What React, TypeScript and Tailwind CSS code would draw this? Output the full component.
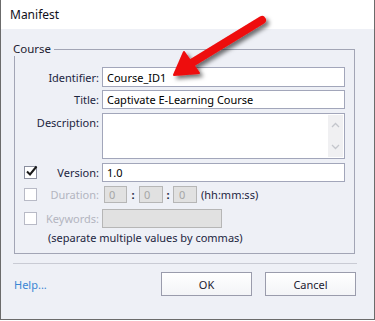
import React from "react";

const font = { fontFamily: '"Noto Sans", "Open Sans", sans-serif' };

function Check({ checked, disabled }: { checked?: boolean; disabled?: boolean }) {
  return (
    <div
      className={`relative w-[13px] h-[13px] border bg-white ${
        disabled ? "border-[#b8bac6]" : "border-[#8a8e9e]"
      }`}
    >
      {checked && (
        <svg className="absolute left-[0px] top-[-2px]" width="13" height="13" viewBox="0 0 13 13">
          <path d="M2 6.5 L5 9.5 L11.5 1.5" fill="none" stroke="#1a1a1a" strokeWidth="2" />
        </svg>
      )}
    </div>
  );
}

function Arrow() {
  return (
    <svg className="absolute left-0 top-0 pointer-events-none" width="375" height="321" viewBox="0 0 375 321">
      <defs>
        <filter id="sh" x="-20%" y="-20%" width="140%" height="140%">
          <feDropShadow dx="3" dy="3" stdDeviation="2.2" floodColor="#000" floodOpacity="0.55" />
        </filter>
      </defs>
      <g filter="url(#sh)">
        <line x1="262" y1="20" x2="190" y2="64" stroke="#ee0a0a" strokeWidth="8" strokeLinecap="round" />
        <polygon points="174,75 184,52 199,73" fill="#ee0a0a" stroke="#ee0a0a" strokeWidth="2" strokeLinejoin="round" />
      </g>
    </svg>
  );
}

export default function App() {
  return (
    <div className="relative w-[375px] h-[321px] bg-white text-[11px] leading-[15px]" style={font}>
      <div className="w-[375px] h-[320px] border-l border-r border-b border-[#6b6b6b] flex flex-col bg-[#eef0f6]">
        {/* title bar */}
        <div className="h-[29px] bg-white flex items-center pl-[9px] text-[#10101a] text-[12px]">Manifest</div>

        {/* body */}
        <div className="flex flex-col pl-[13px] pr-[18px] pt-[20px]">
          {/* group box */}
          <div className="relative border border-[#a2a5b5] w-[341px] h-[205px] pt-[17px] pr-[9px] flex flex-col">
            <span className="absolute left-[-2px] top-[-9px] bg-[#eef0f6] pr-[3px] text-[11.5px] text-[#1c2030]">Course</span>

            {/* Identifier */}
            <div className="flex items-center h-[20px]">
              <div className="w-[87px] pr-[3px] text-right text-[#1c2541]">Identifier:</div>
              <div className="flex-1 h-[20px] border border-[#a2a6ba] bg-white flex items-center pl-[4px] text-black">Course_ID1</div>
            </div>

            {/* Title */}
            <div className="flex items-center h-[19px] mt-[3px]">
              <div className="w-[87px] pr-[3px] text-right text-[#1c2541]">Title:</div>
              <div className="flex-1 h-[19px] border border-[#a2a6ba] bg-white flex items-center pl-[4px] text-black">
                Captivate E-Learning Course
              </div>
            </div>

            {/* Description */}
            <div className="flex items-start h-[46px] mt-[4px]">
              <div className="w-[87px] pr-[3px] text-right text-[#1c2541] pt-[2px]">Description:</div>
              <div className="flex-1 h-[46px] border border-[#a2a6ba] bg-white flex justify-end p-[1px]">
                <div className="w-[15px] bg-[#f0f0f2] flex flex-col items-center justify-between py-[7px]">
                  <svg width="9" height="6" viewBox="0 0 9 6">
                    <path d="M1 5 L4.5 1.5 L8 5" fill="none" stroke="#c4c6cc" strokeWidth="1.3" />
                  </svg>
                  <svg width="9" height="6" viewBox="0 0 9 6">
                    <path d="M1 1 L4.5 4.5 L8 1" fill="none" stroke="#c4c6cc" strokeWidth="1.3" />
                  </svg>
                </div>
              </div>
            </div>

            {/* Version */}
            <div className="flex items-center h-[19px] mt-[4px]">
              <div className="w-[87px] pr-[3px] flex items-center">
                <div className="ml-[9px]">
                  <Check checked />
                </div>
                <div className="flex-1 text-right text-[#1c2541]">Version:</div>
              </div>
              <div className="flex-1 h-[19px] border border-[#a2a6ba] bg-white flex items-center pl-[4px] text-black">1.0</div>
            </div>

            {/* Duration */}
            <div className="flex items-center h-[17px] mt-[4px]">
              <div className="w-[87px] pr-[3px] flex items-center">
                <div className="ml-[9px]">
                  <Check disabled />
                </div>
                <div className="flex-1 text-right text-[#b3b5c0]">Duration:</div>
              </div>
              <div className="flex items-center ml-[2px]">
                <div className="w-[23px] h-[17px] border border-[#b6b6b6] bg-[#e1e1e1] text-[#a6a6a6] pl-[4px] flex items-center">0</div>
                <span className="w-[12px] text-center font-bold text-[#1c2541]">:</span>
                <div className="w-[24px] h-[17px] border border-[#b6b6b6] bg-[#e1e1e1] text-[#a6a6a6] pl-[4px] flex items-center">0</div>
                <span className="w-[10px] text-center font-bold text-[#1c2541]">:</span>
                <div className="w-[24px] h-[17px] border border-[#b6b6b6] bg-[#e1e1e1] text-[#a6a6a6] pl-[5px] flex items-center">0</div>
                <span className="ml-[4px] text-[#1c2541]">(hh:mm:ss)</span>
              </div>
            </div>

            {/* Keywords */}
            <div className="flex items-center h-[19px] mt-[6px]">
              <div className="w-[87px] pr-[3px] flex items-center">
                <div className="ml-[9px]">
                  <Check disabled />
                </div>
                <div className="flex-1 text-right text-[#b3b5c0]">Keywords:</div>
              </div>
              <div className="w-[120px] h-[19px] border border-[#b6b6b6] bg-[#e1e1e1]" />
            </div>

            <div className="mt-[2px] pl-[33px] text-[#1c2541]">(separate multiple values by commas)</div>
          </div>

          {/* separator */}
          <div className="mt-[9px] ml-[-1px] w-[344px] h-[1px] bg-[#c9cbd4]" />

          {/* footer */}
          <div className="flex items-center mt-[8px] h-[24px]">
            <span className="text-[#3a86d4] flex-1">Help...</span>
            <button className="w-[91px] h-[24px] border border-[#9a9cac] bg-gradient-to-b from-white to-[#f3f4f7] text-[#1c2030]">OK</button>
            <button className="ml-[13px] w-[91px] h-[24px] border border-[#9a9cac] bg-gradient-to-b from-white to-[#f3f4f7] text-[#1c2030]">Cancel</button>
          </div>
        </div>
      </div>
      <Arrow />
    </div>
  );
}
